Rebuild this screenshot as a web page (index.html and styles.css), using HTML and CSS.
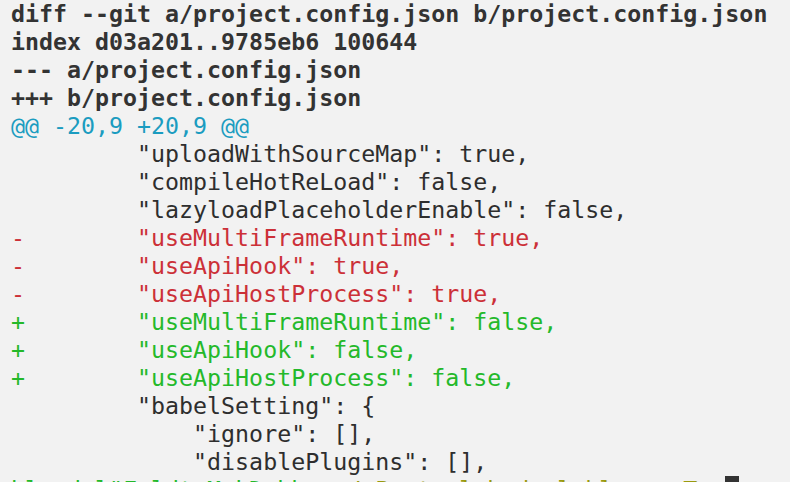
FILE: index.html
```html
<!DOCTYPE html>
<html>
<head>
<meta charset="utf-8">
<link rel="stylesheet" href="styles.css">
</head>
<body>
<pre class="term"><span class="meta">diff --git a/project.config.json b/project.config.json</span>
<span class="meta">index d03a201..9785eb6 100644</span>
<span class="meta">--- a/project.config.json</span>
<span class="meta">+++ b/project.config.json</span>
<span class="hunk">@@ -20,9 +20,9 @@</span>
         "uploadWithSourceMap": true,
         "compileHotReLoad": false,
         "lazyloadPlaceholderEnable": false,
<span class="del">-        "useMultiFrameRuntime": true,</span>
<span class="del">-        "useApiHook": true,</span>
<span class="del">-        "useApiHostProcess": true,</span>
<span class="add">+        "useMultiFrameRuntime": false,</span>
<span class="add">+        "useApiHook": false,</span>
<span class="add">+        "useApiHostProcess": false,</span>
         "babelSetting": {
             "ignore": [],
             "disablePlugins": [],
<span class="add">blaadel"Feldt MakDebhunc</span><span class="olive">/aParterlabodexlehlerves</span><span class="olive">T</span>  <span class="cursor"> </span></pre>
</body>
</html>
```

FILE: styles.css
```css
html, body {
  margin: 0;
  padding: 0;
  background: #f2f2f2;
  height: 100%;
  overflow: hidden;
}

.term {
  margin: 0;
  padding: 0 0 0 11px;
  font-family: "DejaVu Sans Mono", monospace;
  font-size: 23.27px;
  line-height: 28px;
  color: #2e2e2e;
  white-space: pre;
}

.meta {
  font-weight: bold;
  color: #333333;
}

.hunk {
  color: #1b9cc0;
}

.del {
  color: #cc3038;
}

.add {
  color: #24b92a;
}

.olive {
  color: #9a9a10;
}

.cursor {
  background: #333333;
}
```
